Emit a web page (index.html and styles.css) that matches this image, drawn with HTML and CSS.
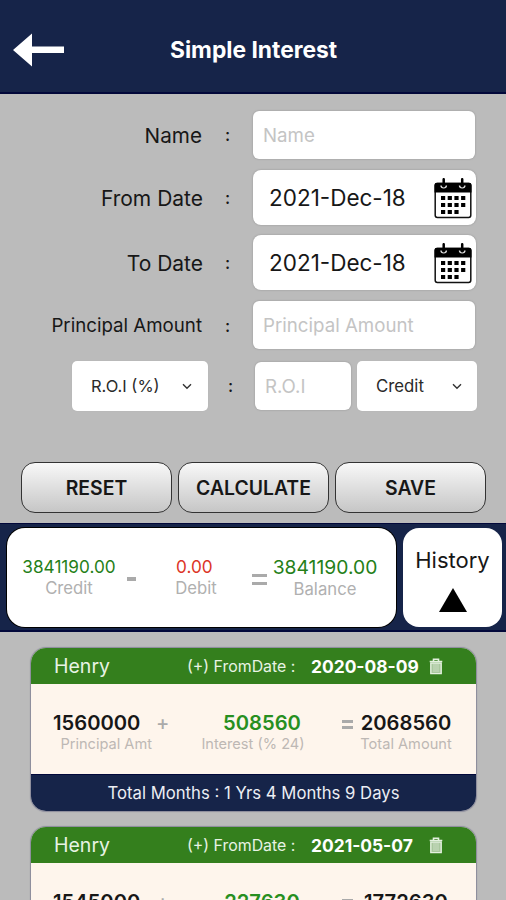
FILE: index.html
```html
<!DOCTYPE html>
<html lang="en">
<head>
<meta charset="utf-8">
<title>Simple Interest</title>
<link rel="stylesheet" href="styles.css">
</head>
<body>
<svg class="defs" width="0" height="0" aria-hidden="true">
  <symbol id="calendar" viewBox="0 0 38 41">
    <rect x="1.2" y="5.5" width="35.6" height="34" rx="2.2" fill="#fff" stroke="#111" stroke-width="1.5"/>
    <path d="M.5 14.5V7q0-2.300 2.300-2.300h32.400q2.300 0 2.300 2.300v7.500z" fill="#000"/>
    <path d="M7 7.500q0 2.300 2.700 2.300t2.700-2.300M25.500 7.500q0 2.300 2.700 2.300t2.700-2.300" fill="none" stroke="#ddd" stroke-width="1.400"/>
    <path d="M9.700 1.200v7M28.200 1.200v7" stroke="#000" stroke-width="2.500" stroke-linecap="round"/>
    <path d="M7 20h25M7 27h25M7 34h18.500" stroke="#000" stroke-width="4" stroke-dasharray="4.200 2.500"/>
  </symbol>
  <symbol id="trash" viewBox="0 0 14 17">
    <path d="M.7 3.500h12.600M4.500 3V1.300h5V3" fill="none" stroke="#e4f0df" stroke-width="1.600"/>
    <path d="M1.800 5h10.400v10.600H1.800z" fill="#a9c79e" stroke="#e4f0df" stroke-width="1.400"/>
    <path d="M5 6v8M7 6v8M9 6v8" stroke="#d3e3cc" stroke-width=".8"/>
  </symbol>
  <symbol id="chevron" viewBox="0 0 10 7">
    <path d="M1 1.300l4 4 4-4" fill="none" stroke="#333" stroke-width="1.400"/>
  </symbol>
</svg>

<header class="topbar">
  <svg class="back" viewBox="0 0 52 34"><path d="M0 17L19 .5V13.500h32v6.500H19v13.500z" fill="#fff"/></svg>
  <h1>Simple Interest</h1>
</header>

<main>
  <section class="form">
    <div class="row row-name"><label>Name</label><i>:</i><div class="field hint">Name</div></div>
    <div class="row row-date"><label>From Date</label><i>:</i><div class="field date"><span>2021-Dec-18</span><svg><use href="#calendar"/></svg></div></div>
    <div class="row row-date"><label>To Date</label><i>:</i><div class="field date"><span>2021-Dec-18</span><svg><use href="#calendar"/></svg></div></div>
    <div class="row row-principal"><label>Principal Amount</label><i>:</i><div class="field hint">Principal Amount</div></div>
    <div class="row-rate">
      <div class="field select rate"><span>R.O.I (%)</span><svg><use href="#chevron"/></svg></div>
      <i>:</i>
      <div class="field hint roi">R.O.I</div>
      <div class="field select kind"><span>Credit</span><svg><use href="#chevron"/></svg></div>
    </div>
  </section>

  <div class="actions"><button>RESET</button><button>CALCULATE</button><button>SAVE</button></div>

  <section class="summary">
    <div class="totals">
      <div class="sum credit"><b>3841190.00</b><small>Credit</small></div>
      <span class="op minus"></span>
      <div class="sum debit"><b>0.00</b><small>Debit</small></div>
      <span class="op equals"></span>
      <div class="sum balance"><b>3841190.00</b><small>Balance</small></div>
    </div>
    <div class="history"><span>History</span><svg viewBox="0 0 28 24"><path d="M14 0L28 24H0z"/></svg></div>
  </section>

  <section class="list">
    <article class="card">
      <div class="card-head"><span class="who">Henry</span><span class="from">(+) FromDate :</span><b>2020-08-09</b><svg><use href="#trash"/></svg></div>
      <div class="card-body">
        <div class="amt principal"><b>1560000</b><small>Principal Amt</small></div>
        <span class="sign">+</span>
        <div class="amt interest"><b>508560</b><small>Interest (% 24)</small></div>
        <span class="eq"></span>
        <div class="amt total"><b>2068560</b><small>Total Amount</small></div>
      </div>
      <div class="card-foot">Total Months : 1 Yrs 4 Months 9 Days</div>
    </article>
    <article class="card">
      <div class="card-head"><span class="who">Henry</span><span class="from">(+) FromDate :</span><b>2021-05-07</b><svg><use href="#trash"/></svg></div>
      <div class="card-body">
        <div class="amt principal"><b>1545000</b></div>
        <span class="sign">+</span>
        <div class="amt interest"><b>227630</b></div>
        <span class="eq"></span>
        <div class="amt total"><b>1772630</b></div>
      </div>
    </article>
  </section>
</main>
</body>
</html>
```
FILE: styles.css
```css
* { box-sizing: border-box; }
html, body { height: 900px; overflow: hidden; }
body { margin: 0; background: #bbb; color: #171717; font-family: Inter, "Liberation Sans", sans-serif; white-space: nowrap; }
.defs { display: none; }
i { font-style: normal; }

.topbar { height: 94px; background: #162449; border-bottom: 2px solid #02083a; display: flex; align-items: center; padding: 7px 0 0 13px; }
.back { width: 52px; height: 34px; }
.topbar h1 { margin: 1px 0 0 105px; font-size: 22.800px; line-height: 28px; font-weight: 700; color: #fff; }

.form { padding: 17px 0 0; }
.row { display: grid; grid-template-columns: 202px 51px auto; align-items: center; justify-content: start; }
.row label { text-align: right; font-size: 20.700px; }
.row i, .row-rate i { text-align: center; font-size: 17px; font-weight: 500; }
.field { background: #fff; border-radius: 6px; box-shadow: 0 0 2px #8d8d8d; display: flex; align-items: center; }
.hint { color: #c4c4c4; padding-left: 10px; font-size: 18.700px; }
.row-name, .row-principal { height: 48px; }
.row-name .field, .row-principal .field { width: 222px; height: 48px; }
.row-date { height: 55px; margin-top: 11px; }
.row-date label { font-size: 21px; margin-right: -1px; padding-top: 2px; }
.row-date + .row-date { margin-top: 10px; }
.row-date .field { width: 223px; height: 55px; border-radius: 8px; }
.date { padding: 0 4px 0 16px; justify-content: space-between; font-size: 22.500px; }
.date svg { width: 38px; height: 41px; margin-top: 2px; }
.row-principal { margin-top: 11px; padding-top: 1px; }
.row-principal .field { margin-top: -1px; padding-top: 1px; }
.row-principal label { font-size: 18.700px; }
.row-rate { display: flex; align-items: center; margin: 12px 0 0 72px; height: 50px; }
.row-rate i { width: 47px; padding-right: 2px; }
.select { height: 50px; justify-content: space-between; border-radius: 5px; box-shadow: 0 0 1px #aaa; color: #2a2a2a; }
.select svg { width: 10px; height: 7px; }
.rate { width: 136px; padding: 0 16px 0 19px; font-size: 16.500px; }
.roi { width: 96px; height: 48px; font-size: 18.700px; }
.kind { width: 120px; margin-left: 6px; padding: 0 15px 0 19px; font-size: 16.800px; }

.actions { display: flex; gap: 6px; margin: 51px 0 0 21px; }
.actions button { width: 151px; height: 51px; padding: 0; border: 1px solid #333; border-radius: 14px; background: linear-gradient(#f8f8f8, #c6c6c6); font: 600 19.400px Inter, sans-serif; color: #171717; }

.summary { margin-top: 10px; height: 109px; background: #162449; border-top: 1px solid #02083a; border-bottom: 2px solid #02083a; display: flex; padding: 4px 0 0 7px; gap: 7px; }
.totals { width: 389px; height: 99px; border-radius: 18px; background: #fff; box-shadow: 0 0 0 1px #000; display: flex; align-items: flex-start; padding: 28px 0 0 15px; }
.sum { display: flex; flex-direction: column; align-items: center; }
.sum b { font-weight: 400; font-size: 17.200px; line-height: 22px; color: #258018; }
.sum small { font-size: 16.700px; line-height: 20px; color: #b0b0b0; }
.sum.credit { width: 94px; }
.sum.debit { width: 56px; }
.sum.debit b { color: #dc3528; align-self: flex-start; margin-left: 8px; }
.sum.balance { width: 106px; }
.sum.balance b { font-size: 19.300px; }
.sum.balance small { padding-top: 1px; }
.op { background: #aaa; }
.minus { width: 9px; height: 4px; margin: 21px 32px 0 11px; }
.equals { width: 15px; height: 11px; margin: 18px 5px 0 28px; background: linear-gradient(#aaa 3px, transparent 3px 8px, #aaa 8px); }
.history { width: 99px; height: 99px; border-radius: 16px; background: #fff; display: flex; flex-direction: column; align-items: center; padding-top: 18px; font-size: 22px; line-height: 28px; }
.history svg { width: 28px; height: 24px; margin-top: 14px; }

.list { padding: 16px 0 0 31px; }
.card { width: 445px; height: 163px; margin-bottom: 16px; border-radius: 15px; overflow: hidden; box-shadow: 0 0 1px 1px #8b8b9b; background: #fef5ec; }
.card-head { height: 36px; background: #347f1d; color: #e8f3e4; display: flex; align-items: center; padding-left: 23px; }
.who { width: 133px; font-size: 19.500px; }
.from { width: 124px; font-size: 15.900px; }
.card-head b { width: 118px; font-size: 17.400px; color: #fff; }
.card-head svg { width: 14px; height: 17px; }
.card-body { height: 90px; display: flex; align-items: flex-start; padding: 27px 0 0 22px; }
.amt { display: flex; flex-direction: column; }
.amt b { font-size: 20.200px; line-height: 24px; font-weight: 600; }
.amt small { font-size: 14.600px; line-height: 18px; color: #bdb8b4; }
.principal { width: 99px; }
.principal small { align-self: flex-end; }
.sign { width: 26px; margin-left: 4px; font-size: 20px; font-weight: 500; line-height: 24px; color: #aaa; }
.interest { width: 104px; margin-left: 19px; align-items: center; }
.interest b { color: #278f20; margin-left: 18px; }
.eq { width: 11px; height: 9px; margin: 9px 8px 0 37px; background: linear-gradient(#aaa 3px, transparent 3px 6px, #aaa 6px); }
.total { width: 90px; align-items: center; }
.card-foot { height: 37px; background: #162449; border-top: 1px solid #02083a; color: #eceef4; display: flex; align-items: center; justify-content: center; font-size: 16.700px; }
```
